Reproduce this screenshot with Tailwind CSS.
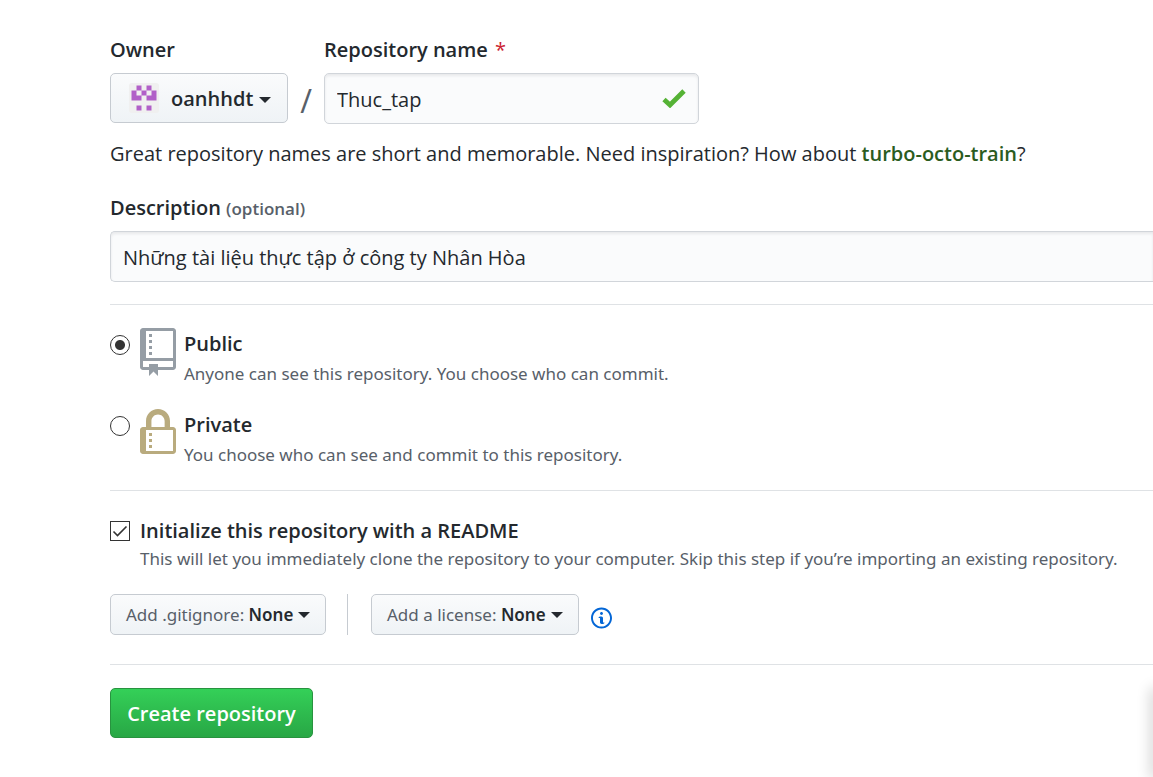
<!DOCTYPE html>
<html lang="en">
<head>
<meta charset="utf-8">
<title>Create a new repository</title>
<script src="https://cdn.jsdelivr.net/npm/@tailwindcss/browser@4"></script>
</head>
<body class="min-h-screen overflow-x-hidden bg-white font-['Open_Sans','Noto_Sans',sans-serif] text-[20px] leading-8 text-[#24292e]">
<main class="pt-[34px] pl-[110px]">
<form>
  <div class="flex">
    <div>
      <div id="owner" class="font-semibold">Owner</div>
      <button type="button" aria-labelledby="owner" class="mt-[7px] flex h-[50px] w-[178px] items-center rounded-[5px] border border-[#c6cbd1] bg-linear-to-b from-[#fafbfc] to-[#eff3f6] pl-[18px] font-semibold">
        <svg class="size-[30px] shrink-0" viewBox="0 0 30 30"><rect width="30" height="30" rx="3" fill="#f0f0f0"/><path transform="translate(.5 .5)" fill="#b160c8" d="M7 2h5v5H7zM17 2h5v5h-5zM2 7h5v5H2zM12 7h5v5h-5zM22 7h5v5h-5zM2 12h10v5H2zM17 12h10v5H17zM7 22h5v5H7zM17 22h5v5h-5z"/></svg>
        <span class="ml-3 pt-[2px]">oanhhdt</span>
        <svg class="mt-1 ml-[6px] h-[6px] w-3" viewBox="0 0 12 6" fill="currentColor"><path d="M0 0h12L6 6z"/></svg>
      </button>
    </div>
    <div class="flex w-9 items-end justify-center pb-[7px] text-[32px] leading-8 text-[#586069]">/</div>
    <div>
      <label for="name" class="block font-semibold">Repository name <span class="ml-[2px] font-medium text-[#cb2431]">*</span></label>
      <div class="mt-[7px] flex h-[51px] w-[375px] items-center rounded-[5px] border border-[#d1d5da] bg-[#fafbfc] px-3 shadow-[inset_0_2px_3px_rgba(27,31,35,0.08)]">
        <input id="name" value="Thuc_tap" class="min-w-0 flex-1 bg-transparent pt-[3px] outline-none">
        <svg class="h-[19px] w-6" viewBox="0 0 24 19"><path d="M2 10.5l6 5.5L22 2" fill="none" stroke="#55b235" stroke-width="4.800"/></svg>
      </div>
    </div>
  </div>
  <p class="mt-[14px] whitespace-nowrap">Great repository names are short and memorable. Need inspiration? How about <a href="#" class="font-semibold text-[#2b5c1e]">turbo-octo-train</a>?</p>
  <label for="desc" class="mt-[22px] block font-semibold">Description <span class="text-[17px] text-[#586069]">(optional)</span></label>
  <input id="desc" value="Những tài liệu thực tập ở công ty Nhân Hòa" class="mt-[6px] block h-[51px] w-full rounded-l-[5px] border border-r-0 border-[#d1d5da] bg-[#fafbfc] px-3 pt-[2px] shadow-[inset_0_2px_3px_rgba(27,31,35,0.08)] outline-none">
  <hr class="mt-[22px] border-[#dfe2e5]">
  <div class="mt-[23px] flex">
    <input id="public" type="radio" name="visibility" checked class="mt-[7px] size-5 appearance-none rounded-full border border-[#333] bg-white checked:bg-[radial-gradient(circle,#333_4.5px,transparent_5.5px)]">
    <svg class="ml-[10px] h-12 w-9" viewBox="0 0 12 16" fill="#959da5"><path d="M4 9H3V8h1v1zm0-3H3v1h1V6zm0-2H3v1h1V4zm0-2H3v1h1V2zm8-1v12c0 .55-.45 1-1 1H6v2l-1.5-1.5L3 16v-2H1c-.55 0-1-.45-1-1V1c0-.55.45-1 1-1h10c.55 0 1 .45 1 1zm-1 10H1v2h2v-1h3v1h5v-2zm0-10H2v9h9V1z"/></svg>
    <div class="ml-2">
      <label for="public" class="block font-semibold">Public</label>
      <p class="font-['Noto_Sans',sans-serif] text-[17px] leading-7 text-[#586069]">Anyone can see this repository. You choose who can commit.</p>
    </div>
  </div>
  <div class="mt-[21px] flex">
    <input id="private" type="radio" name="visibility" class="mt-[7px] size-5 appearance-none rounded-full border border-[#333] bg-white checked:bg-[radial-gradient(circle,#333_4.5px,transparent_5.5px)]">
    <svg class="ml-[10px] h-12 w-9" viewBox="0 0 12 16" fill="#b9ab7e"><path d="M4 13H3v-1h1v1zm8-6v7c0 .55-.45 1-1 1H1c-.55 0-1-.45-1-1V7c0-.55.45-1 1-1h1V4c0-2.2 1.8-4 4-4s4 1.8 4 4v2h1c.55 0 1 .45 1 1zM3.8 6h4.41V4c0-1.22-.98-2.2-2.2-2.2-1.22 0-2.2.98-2.2 2.2v2H3.8zM11 7H2v7h9V7zM4 8H3v1h1V8zm0 2H3v1h1v-1z"/></svg>
    <div class="ml-2">
      <label for="private" class="block font-semibold">Private</label>
      <p class="font-['Noto_Sans',sans-serif] text-[17px] leading-7 text-[#586069]">You choose who can see and commit to this repository.</p>
    </div>
  </div>
  <hr class="mt-[21px] border-[#dfe2e5]">
  <div class="mt-6 flex">
    <div class="mt-[6px] grid size-5 shrink-0">
      <input id="readme" type="checkbox" checked class="peer col-start-1 row-start-1 size-5 appearance-none border border-[#333] bg-white">
      <svg class="pointer-events-none invisible col-start-1 row-start-1 size-5 peer-checked:visible" viewBox="0 0 20 20"><path d="M3.500 10.500l4 4L16.500 5.500" fill="none" stroke="#333" stroke-width="1.600"/></svg>
    </div>
    <div class="ml-[10px]">
      <label for="readme" class="block font-semibold">Initialize this repository with a README</label>
      <p class="font-['Noto_Sans',sans-serif] text-[17px] leading-6 whitespace-nowrap text-[#586069]">This will let you immediately clone the repository to your computer. Skip this step if you’re importing an existing repository.</p>
    </div>
  </div>
  <div class="mt-[23px] flex items-center font-['Noto_Sans',sans-serif] text-[17px]">
    <button type="button" class="flex h-[41px] w-[216px] items-center rounded-[5px] border border-[#c6cbd1] bg-linear-to-b from-[#fafbfc] to-[#eff3f6] pl-[15px] whitespace-pre"><span class="text-[#586069]">Add .gitignore: </span><span class="font-semibold">None</span>
      <svg class="ml-[5px] h-[6px] w-3" viewBox="0 0 12 6" fill="currentColor"><path d="M0 0h12L6 6z"/></svg></button>
    <div class="ml-[21px] h-[41px] w-px bg-[#c6cbd1]"></div>
    <button type="button" class="ml-[23px] flex h-[41px] w-[208px] items-center rounded-[5px] border border-[#c6cbd1] bg-linear-to-b from-[#fafbfc] to-[#eff3f6] pl-[15px] whitespace-pre"><span class="text-[#586069]">Add a license: </span><span class="font-semibold">None</span>
      <svg class="ml-[5px] h-[6px] w-3" viewBox="0 0 12 6" fill="currentColor"><path d="M0 0h12L6 6z"/></svg></button>
    <a href="#" aria-label="License information" class="mt-[6px] ml-3"><svg class="h-6 w-[21px]" viewBox="0 0 14 16" fill="#0366d6"><path d="M6.300 5.690a.942.942 0 0 1-.28-.7c0-.28.09-.52.28-.7.19-.18.42-.28.7-.28.28 0 .52.09.7.28.18.19.28.42.28.7 0 .28-.09.52-.28.7a1 1 0 0 1-.7.3c-.28 0-.52-.11-.7-.3zM8 7.990c-.02-.25-.11-.48-.31-.69-.2-.19-.42-.3-.69-.31H6c-.27.02-.48.13-.69.31-.2.2-.3.44-.31.69h1v3c.02.27.11.5.31.69.2.2.42.31.69.31h1c.27 0 .48-.11.69-.31.2-.19.3-.42.31-.69H8V7.980v.01zM7 2.300c-3.140 0-5.700 2.540-5.700 5.680 0 3.140 2.560 5.700 5.700 5.700s5.700-2.550 5.700-5.700c0-3.150-2.560-5.690-5.700-5.690v.01zM7 .98c3.860 0 7 3.140 7 7s-3.140 7-7 7-7-3.120-7-7 3.140-7 7-7z"/></svg></a>
  </div>
  <hr class="mt-[29px] border-[#dfe2e5]">
  <button type="submit" class="mt-[23px] h-[50px] w-[203px] rounded-[5px] border border-[#28933f] bg-linear-to-b from-[#34d058] to-[#28a745] pt-[2px] font-semibold text-white">Create repository</button>
</form>
</main>
<div class="pointer-events-none fixed top-[690px] -right-1 bottom-0 w-1 shadow-[0_0_14px_2px_rgba(0,0,0,0.22)]"></div>
</body>
</html>
